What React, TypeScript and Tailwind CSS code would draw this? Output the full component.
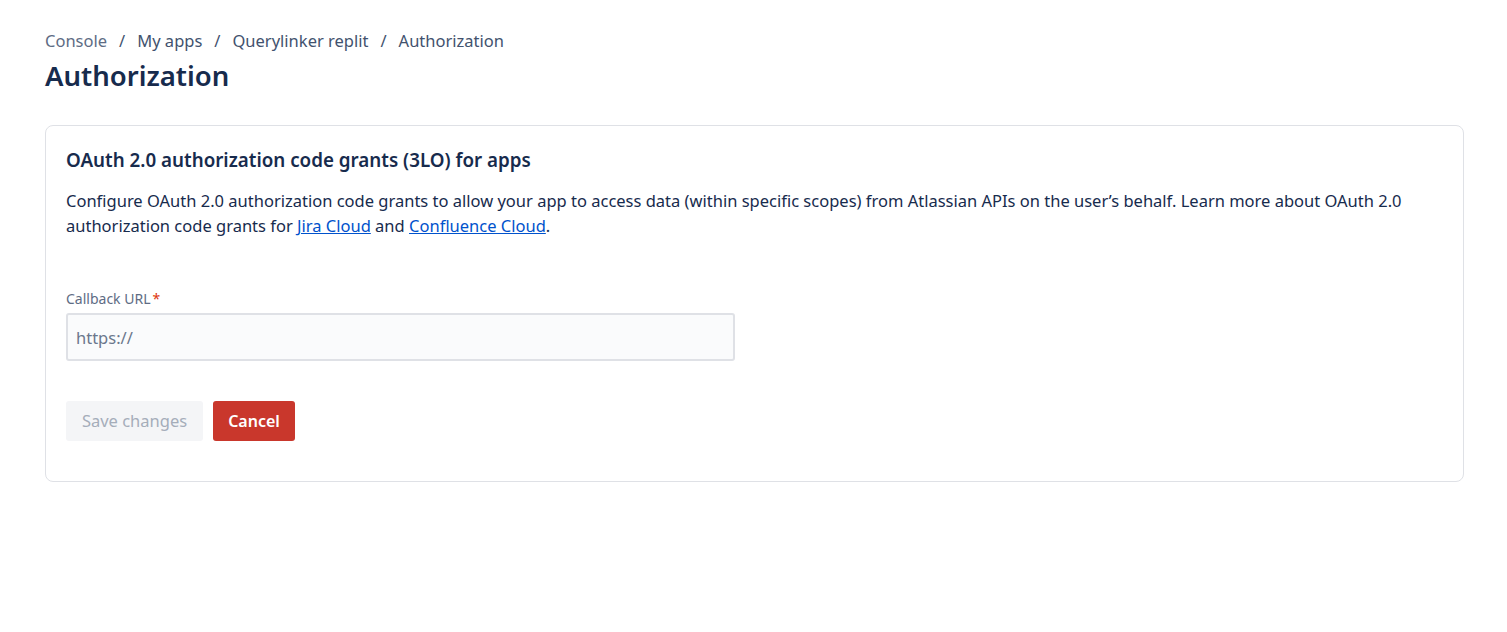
import React from "react";

const font = { fontFamily: '"Segoe UI", "Noto Sans", "Open Sans", sans-serif' };

export default function App() {
  return (
    <div className="min-h-[632px] bg-white pl-[45px] pr-[43px] pt-[29px] text-[#172b4d]" style={font}>
      {/* breadcrumbs */}
      <nav className="flex items-center text-[16.5px] leading-6 text-[#42526e]">
        <a className="text-[#5e6c84]">Console</a>
        <span className="mx-[12px]">/</span>
        <a>My apps</a>
        <span className="mx-[12px]">/</span>
        <a>Querylinker replit</a>
        <span className="mx-[12px]">/</span>
        <span>Authorization</span>
      </nav>
      <h1 className="mt-[7px] text-[27.5px] font-semibold leading-8 text-[#172b4d]">Authorization</h1>

      <div className="mt-[33px] rounded-lg border border-[#dfe1e6] px-5 pt-[22px] pb-[40px]">
        <h2 className="text-[18.8px] font-semibold leading-6">OAuth 2.0 authorization code grants (3LO) for apps</h2>
        <p className="mt-[16px] text-[16.5px] leading-[25px] text-[#172b4d]">
          Configure OAuth 2.0 authorization code grants to allow your app to access data (within specific scopes) from
          Atlassian APIs on the user’s behalf. Learn more about OAuth 2.0 authorization code grants for{" "}
          <a className="text-[#0052cc] underline">Jira Cloud</a> and{" "}
          <a className="text-[#0052cc] underline">Confluence Cloud</a>.
        </p>

        <div className="mt-[53px]">
          <label className="block text-[14px] leading-4 text-[#5e6c84]">
            Callback URL<span className="ml-[2px] text-[#de350b]">*</span>
          </label>
          <input
            type="text"
            placeholder="https://"
            className="mt-[6px] box-border h-[48px] w-[669px] rounded-[3px] border-2 border-[#dfe1e6] bg-[#fafbfc] px-[8px] text-[16.5px] text-[#172b4d] placeholder:text-[#6b778c] outline-none"
          />
        </div>

        <div className="mt-[40px] flex gap-[10px]">
          <button className="h-10 w-[137px] rounded-[3px] bg-[#f4f5f7] text-[16.5px] text-[#a5adba]">Save changes</button>
          <button className="h-10 w-[82px] rounded-[3px] bg-[#c9372c] text-[16px] font-semibold text-white">Cancel</button>
        </div>
      </div>
    </div>
  );
}
